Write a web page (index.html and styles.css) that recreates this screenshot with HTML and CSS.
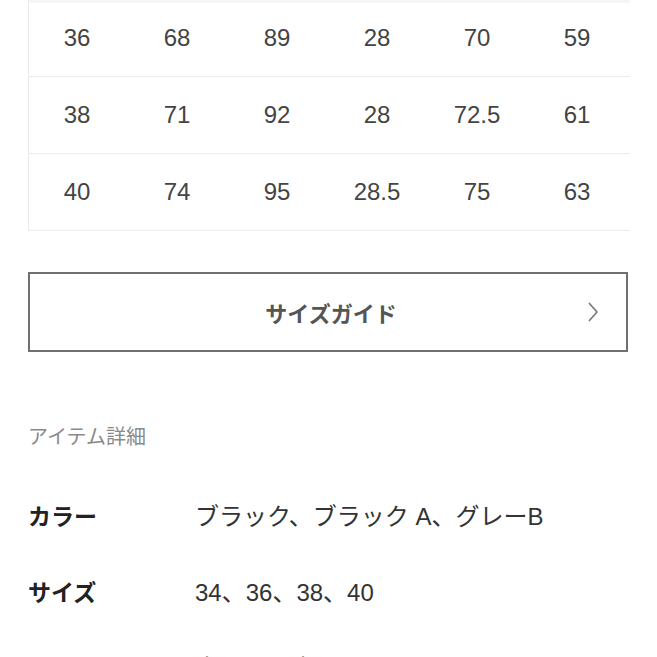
FILE: index.html
```html
<!DOCTYPE html>
<html lang="ja">
<head>
    <meta charset="UTF-8">
    <title>サイズ・アイテム詳細</title>
    <link rel="stylesheet" href="styles.css">
</head>
<body>
<div class="page">
    <div class="size-table">
        <div class="table-head"></div>
        <div class="row first">
            <span>36</span><span>68</span><span>89</span><span>28</span><span>70</span><span>59</span>
        </div>
        <div class="row">
            <span>38</span><span>71</span><span>92</span><span>28</span><span>72.5</span><span>61</span>
        </div>
        <div class="row">
            <span>40</span><span>74</span><span>95</span><span>28.5</span><span>75</span><span>63</span>
        </div>
    </div>

    <a class="guide-btn" href="#">
        <span class="guide-label">サイズガイド</span>
        <svg class="chevron" width="12" height="22" viewBox="0 0 12 22">
            <polyline points="2,2 10,11 2,20" fill="none" stroke="#777" stroke-width="1.6"/>
        </svg>
    </a>

    <h2 class="section-title">アイテム詳細</h2>

    <dl class="details">
        <div class="detail">
            <dt>カラー</dt>
            <dd>ブラック、ブラック A、グレーB</dd>
        </div>
        <div class="detail">
            <dt>サイズ</dt>
            <dd>34、36、38、40</dd>
        </div>
        <div class="detail">
            <dt>生産国</dt>
            <dd>中国、日本、ベトナム</dd>
        </div>
    </dl>
</div>
</body>
</html>
```

FILE: styles.css
```css
body {
    margin: 0;
    padding: 0;
    background: #fff;
    font-family: "Liberation Sans", "Noto Sans CJK JP", sans-serif;
    color: #333;
    overflow: hidden;
}

.page {
    padding-left: 28px;
    width: 602px;
}

/* size table */
.size-table {
    border-left: 1px solid #e9e9e9;
}

.table-head {
    height: 3px;
    background: #f6f6f6;
}

.row {
    display: grid;
    grid-template-columns: repeat(6, 100px);
    align-items: center;
    height: 76px;
    border-bottom: 1px solid #ececec;
    font-size: 24px;
    color: #444;
}

.row.first {
    height: 73px;
}

.row.first span {
    margin-top: -3px;
}

.row span {
    text-align: center;
    padding-right: 4px;
}

/* size guide button */
.guide-btn {
    display: flex;
    align-items: center;
    justify-content: center;
    position: relative;
    box-sizing: border-box;
    width: 600px;
    height: 80px;
    margin-top: 41px;
    border: 2px solid #707070;
    text-decoration: none;
}

.guide-label {
    font-size: 22px;
    font-weight: bold;
    color: #555;
    margin-left: 6px;
}

.chevron {
    position: absolute;
    right: 27px;
    top: 27px;
}

/* item details */
.section-title {
    margin: 71px 0 0;
    font-size: 20px;
    line-height: 28px;
    font-weight: normal;
    color: #8a8a8a;
}

.details {
    margin: 50px 0 0;
}

.detail {
    display: flex;
    line-height: 32px;
    margin-bottom: 44px;
}

.detail dt {
    width: 167px;
    font-size: 23px;
    font-weight: bold;
    color: #222;
}

.detail dd {
    margin: 0;
    font-size: 24px;
    color: #333;
}
```
